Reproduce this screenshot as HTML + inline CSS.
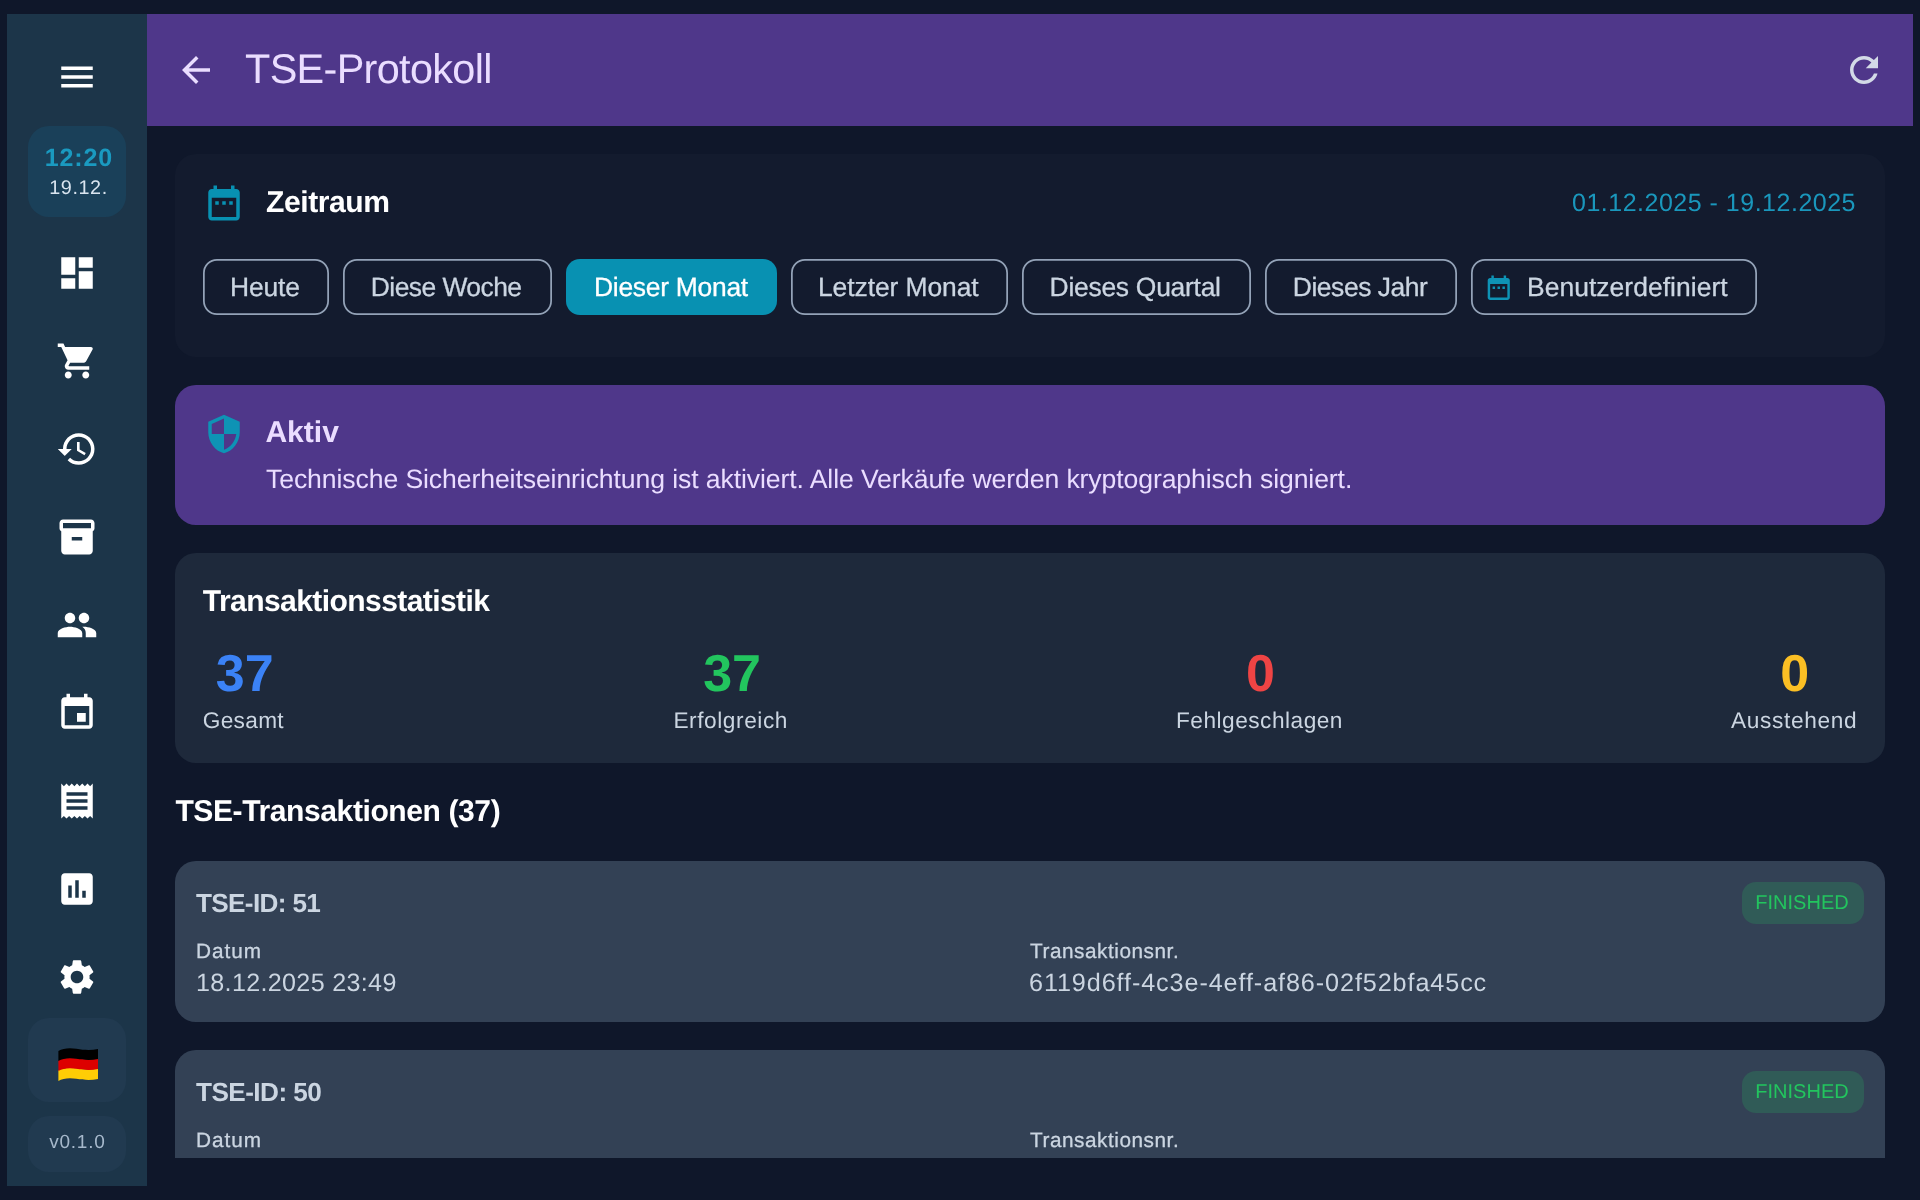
<!DOCTYPE html>
<html lang="de">
<head>
<meta charset="utf-8">
<title>TSE-Protokoll</title>
<style>
*{box-sizing:border-box;margin:0;padding:0}
html,body{width:1920px;height:1200px;overflow:hidden;background:#0f172a}
body{font-family:"Liberation Sans",sans-serif;color:#fff;position:relative;text-rendering:geometricPrecision}
.abs{position:absolute}
.t{position:absolute;white-space:nowrap;line-height:1}
svg{display:block}
#layer{position:absolute;left:0;top:0;width:1920px;height:1200px;will-change:transform}
#content{position:absolute;left:0;top:0;width:1920px;height:1158px;overflow:hidden}
.chip{position:absolute;top:259px;height:56px;border:1.75px solid #94a3b8;border-radius:14px;color:#cbd5e1;font-size:25.2px;line-height:52px;text-align:center;white-space:nowrap}
.chip.on{background:#0891b2;border-color:#0891b2;color:#fff}
.badge{position:absolute;width:122px;height:42px;border-radius:14px;background:#305b57;color:#22c55e;font-size:20px;line-height:43px;padding-right:2px;text-align:center;white-space:nowrap}
</style>
</head>
<body>
<div id="layer">
<div id="content">
<div class="abs" style="left:175px;top:154px;width:1710px;height:203px;background:#131b2e;border-radius:21px;"></div>
<svg class="abs" style="left:203px;top:182px;width:42px;height:42px;fill:#0891b2" viewBox="0 0 24 24"><path d="M9 11H7v2h2v-2zm4 0h-2v2h2v-2zm4 0h-2v2h2v-2zm2-7h-1V2h-2v2H8V2H6v2H5c-1.11 0-1.99.9-1.99 2L3 20c0 1.1.89 2 2 2h14c1.1 0 2-.9 2-2V6c0-1.100-.9-2-2-2zm0 16H5V9h14v11z"/></svg>
<div class="t" style="left:266px;top:187.88px;font-size:30.09px;color:#fff;font-weight:bold;letter-spacing:-0.429px;">Zeitraum</div>
<div class="t" style="left:1456px;top:190.74px;font-size:25px;color:#1a97bc;letter-spacing:0.5px;width:400px;text-align:right;">01.12.2025 - 19.12.2025</div>
<svg class="abs" style="left:203px;top:259px;width:126px;height:56px" viewBox="0 0 126 56"><rect x="0.875" y="0.875" width="124.25" height="54.25" rx="13.1" fill="none" stroke="#94a3b8" stroke-width="1.75"/></svg><div class="t" style="left:230px;top:273.96px;font-size:26.45px;color:#cbd5e1;letter-spacing:-0.125px;-webkit-text-stroke:.3px #cbd5e1;">Heute</div>
<svg class="abs" style="left:343px;top:259px;width:209px;height:56px" viewBox="0 0 209 56"><rect x="0.875" y="0.875" width="207.25" height="54.25" rx="13.1" fill="none" stroke="#94a3b8" stroke-width="1.75"/></svg><div class="t" style="left:370.8px;top:273.96px;font-size:26.45px;color:#cbd5e1;letter-spacing:-0.55px;-webkit-text-stroke:.3px #cbd5e1;">Diese Woche</div>
<svg class="abs" style="left:566px;top:259px;width:211px;height:56px" viewBox="0 0 211 56"><rect x="0" y="0" width="211" height="56" rx="14" fill="#0891b2"/></svg><div class="t" style="left:594px;top:273.96px;font-size:26.45px;color:#fff;letter-spacing:-0.273px;-webkit-text-stroke:.3px #fff;">Dieser Monat</div>
<svg class="abs" style="left:791px;top:259px;width:217px;height:56px" viewBox="0 0 217 56"><rect x="0.875" y="0.875" width="215.25" height="54.25" rx="13.1" fill="none" stroke="#94a3b8" stroke-width="1.75"/></svg><div class="t" style="left:818px;top:273.96px;font-size:26.45px;color:#cbd5e1;letter-spacing:-0.083px;-webkit-text-stroke:.3px #cbd5e1;">Letzter Monat</div>
<svg class="abs" style="left:1022px;top:259px;width:229px;height:56px" viewBox="0 0 229 56"><rect x="0.875" y="0.875" width="227.25" height="54.25" rx="13.1" fill="none" stroke="#94a3b8" stroke-width="1.75"/></svg><div class="t" style="left:1049.6px;top:273.96px;font-size:26.45px;color:#cbd5e1;letter-spacing:-0.269px;-webkit-text-stroke:.3px #cbd5e1;">Dieses Quartal</div>
<svg class="abs" style="left:1265px;top:259px;width:192px;height:56px" viewBox="0 0 192 56"><rect x="0.875" y="0.875" width="190.25" height="54.25" rx="13.1" fill="none" stroke="#94a3b8" stroke-width="1.75"/></svg><div class="t" style="left:1292.8px;top:273.96px;font-size:26.45px;color:#cbd5e1;letter-spacing:-0.45px;-webkit-text-stroke:.3px #cbd5e1;">Dieses Jahr</div>
<svg class="abs" style="left:1471px;top:259px;width:286px;height:56px" viewBox="0 0 286 56"><rect x="0.875" y="0.875" width="284.25" height="54.25" rx="13.1" fill="none" stroke="#94a3b8" stroke-width="1.75"/></svg><div class="t" style="left:1527px;top:273.96px;font-size:26.45px;color:#cbd5e1;letter-spacing:0.047px;-webkit-text-stroke:.3px #cbd5e1;">Benutzerdefiniert</div>
<svg class="abs" style="left:1484.1px;top:272.5px;width:29.5px;height:29.5px;fill:#0e93b5" viewBox="0 0 24 24"><path d="M9 11H7v2h2v-2zm4 0h-2v2h2v-2zm4 0h-2v2h2v-2zm2-7h-1V2h-2v2H8V2H6v2H5c-1.11 0-1.99.9-1.99 2L3 20c0 1.1.89 2 2 2h14c1.1 0 2-.9 2-2V6c0-1.100-.9-2-2-2zm0 16H5V9h14v11z"/></svg>
<div class="abs" style="left:175px;top:385px;width:1710px;height:140px;background:#4f378a;border-radius:21px;"></div>
<svg class="abs" style="left:203px;top:413px;width:42px;height:42px;fill:#0e93b5" viewBox="0 0 24 24"><path d="M12 1L3 5v6c0 5.55 3.84 10.74 9 12 5.16-1.26 9-6.45 9-12V5l-9-4zm0 10.99h7c-.53 4.12-3.28 7.79-7 8.94V12H5V6.3l7-3.11v8.8z"/></svg>
<div class="t" style="left:265.4px;top:417.88px;font-size:30.09px;color:#eaddff;font-weight:bold;">Aktiv</div>
<div class="t" style="left:266px;top:465.83px;font-size:26.6px;color:#eaddff;letter-spacing:-0.096px;">Technische Sicherheitseinrichtung ist aktiviert. Alle Verkäufe werden kryptographisch signiert.</div>
<div class="abs" style="left:175px;top:553px;width:1710px;height:210px;background:#1e293b;border-radius:21px;"></div>
<div class="t" style="left:202.8px;top:586.88px;font-size:30.09px;color:#fff;font-weight:bold;letter-spacing:-0.6px;">Transaktionsstatistik</div>
<div class="t" style="left:144.65px;top:647.58px;font-size:52px;color:#3b82f6;font-weight:bold;width:200px;text-align:center;">37</div>
<div class="t" style="left:202.8px;top:709.16px;font-size:22.67px;color:#cbd5e1;letter-spacing:0.3px;">Gesamt</div>
<div class="t" style="left:632.125px;top:647.58px;font-size:52px;color:#22c55e;font-weight:bold;width:200px;text-align:center;">37</div>
<div class="t" style="left:673.4px;top:709.16px;font-size:22.67px;color:#cbd5e1;letter-spacing:0.575px;">Erfolgreich</div>
<div class="t" style="left:1160.55px;top:647.58px;font-size:52px;color:#ef4444;font-weight:bold;width:200px;text-align:center;">0</div>
<div class="t" style="left:1176px;top:709.16px;font-size:22.67px;color:#cbd5e1;letter-spacing:0.5px;">Fehlgeschlagen</div>
<div class="t" style="left:1694.8px;top:647.58px;font-size:52px;color:#fbbf24;font-weight:bold;width:200px;text-align:center;">0</div>
<div class="t" style="left:1731px;top:709.16px;font-size:22.67px;color:#cbd5e1;letter-spacing:0.667px;">Ausstehend</div>
<div class="t" style="left:175.4px;top:796.88px;font-size:30.09px;color:#fff;font-weight:bold;letter-spacing:-0.429px;">TSE-Transaktionen (37)</div>
<div class="abs" style="left:175px;top:861px;width:1710px;height:160.5px;background:#334155;border-radius:21px;"></div>
<div class="t" style="left:196px;top:890.21px;font-size:26.16px;color:#cbd5e1;font-weight:bold;letter-spacing:-0.667px;">TSE-ID: 51</div>
<div class="badge" style="left:1742px;top:882px">FINISHED</div>
<div class="t" style="left:196px;top:941.76px;font-size:20.78px;color:#cbd5e1;letter-spacing:1px;-webkit-text-stroke:.3px #cbd5e1;">Datum</div>
<div class="t" style="left:196px;top:971.10px;font-size:25.1px;color:#cbd5e1;letter-spacing:0.333px;">18.12.2025 23:49</div>
<div class="t" style="left:1030px;top:941.76px;font-size:20.78px;color:#cbd5e1;letter-spacing:0.536px;-webkit-text-stroke:.3px #cbd5e1;">Transaktionsnr.</div>
<div class="t" style="left:1029px;top:971.02px;font-size:25.2px;color:#cbd5e1;letter-spacing:0.9px;">6119d6ff-4c3e-4eff-af86-02f52bfa45cc</div>
<div class="abs" style="left:175px;top:1050px;width:1710px;height:160.5px;background:#334155;border-radius:21px;"></div>
<div class="t" style="left:196px;top:1079.21px;font-size:26.16px;color:#cbd5e1;font-weight:bold;letter-spacing:-0.556px;">TSE-ID: 50</div>
<div class="badge" style="left:1742px;top:1071px">FINISHED</div>
<div class="t" style="left:196px;top:1130.76px;font-size:20.78px;color:#cbd5e1;letter-spacing:1px;-webkit-text-stroke:.3px #cbd5e1;">Datum</div>
<div class="t" style="left:196px;top:1160.10px;font-size:25.1px;color:#cbd5e1;letter-spacing:0.333px;">18.12.2025 23:48</div>
<div class="t" style="left:1030px;top:1130.76px;font-size:20.78px;color:#cbd5e1;letter-spacing:0.536px;-webkit-text-stroke:.3px #cbd5e1;">Transaktionsnr.</div>
<div class="t" style="left:1029px;top:1160.02px;font-size:25.2px;color:#cbd5e1;letter-spacing:0.9px;">a3f0c2d1-7b4e-4c9a-9e21-5d8f3b6a7c10</div>
</div>
<div class="abs" style="left:7px;top:14px;width:140px;height:1172px;background:#1c3549;"></div>
<svg class="abs" style="left:56px;top:55.75px;width:42px;height:42px;fill:#fff" viewBox="0 0 24 24"><path d="M3 18h18v-2H3v2zm0-5h18v-2H3v2zm0-7v2h18V6H3z"/></svg>
<div class="abs" style="left:28px;top:126px;width:98px;height:91px;background:#1a4059;border-radius:21px;"></div>
<div class="t" style="left:29.5px;top:145.84px;font-size:25px;color:#1a9ac0;font-weight:bold;letter-spacing:0.9px;width:98px;text-align:center;text-indent:.9px;">12:20</div>
<div class="t" style="left:29.5px;top:178.84px;font-size:19.8px;color:#d9e4ef;letter-spacing:0.6px;width:98px;text-align:center;">19.12.</div>
<svg class="abs" style="left:56px;top:251.75px;width:42px;height:42px;fill:#fff" viewBox="0 0 24 24"><path d="M3 13h8V3H3v10zm0 8h8v-6H3v6zm10 0h8V11h-8v10zm0-18v6h8V3h-8z"/></svg>
<svg class="abs" style="left:56px;top:339.82px;width:42px;height:42px;fill:#fff" viewBox="0 0 24 24"><path d="M7 18c-1.1 0-1.99.9-1.99 2S5.9 22 7 22s2-.9 2-2-.9-2-2-2zM1 2v2h2l3.6 7.59-1.35 2.45c-.16.28-.25.61-.25.96 0 1.1.9 2 2 2h12v-2H7.42c-.14 0-.25-.11-.25-.25l.03-.12.9-1.63h7.45c.75 0 1.41-.41 1.75-1.03l3.58-6.49c.08-.14.12-.31.12-.48 0-.55-.45-1-1-1H5.21l-.94-2H1zm16 16c-1.1 0-1.99.9-1.99 2s.89 2 1.99 2 2-.9 2-2-.9-2-2-2z"/></svg>
<svg class="abs" style="left:56px;top:427.89px;width:42px;height:42px;fill:#fff" viewBox="0 0 24 24"><path d="M13 3c-4.97 0-9 4.03-9 9H1l3.89 3.89.07.14L9 12H6c0-3.87 3.13-7 7-7s7 3.13 7 7-3.13 7-7 7c-1.93 0-3.68-.79-4.94-2.06l-1.42 1.42C8.27 19.99 10.51 21 13 21c4.97 0 9-4.03 9-9s-4.03-9-9-9zm-1 5v5l4.28 2.54.72-1.21-3.5-2.08V8H12z"/></svg>
<svg class="abs" style="left:56px;top:515.96px;width:42px;height:42px;fill:#fff" viewBox="0 0 24 24"><path d="M20 2H4c-1 0-2 .9-2 2v3.01c0 .72.43 1.34 1 1.69V20c0 1.1 1.1 2 2 2h14c.9 0 2-.9 2-2V8.7c.57-.35 1-.97 1-1.69V4c0-1.1-1-2-2-2zm-5 12H9v-2h6v2zm5-7H4V4h16v3z"/></svg>
<svg class="abs" style="left:56px;top:604.03px;width:42px;height:42px;fill:#fff" viewBox="0 0 24 24"><path d="M16 11c1.66 0 2.99-1.34 2.99-3S17.66 5 16 5c-1.66 0-3 1.34-3 3s1.34 3 3 3zm-8 0c1.66 0 2.99-1.34 2.99-3S9.66 5 8 5C6.34 5 5 6.34 5 8s1.34 3 3 3zm0 2c-2.33 0-7 1.17-7 3.5V19h14v-2.5c0-2.33-4.67-3.5-7-3.5zm8 0c-.29 0-.62.02-.97.05 1.16.84 1.97 1.97 1.97 3.45V19h6v-2.5c0-2.33-4.67-3.5-7-3.5z"/></svg>
<svg class="abs" style="left:56px;top:692.1px;width:42px;height:42px;fill:#fff" viewBox="0 0 24 24"><path d="M17 12h-5v5h5v-5zM16 1v2H8V1H6v2H5c-1.11 0-1.99.9-1.99 2L3 19c0 1.1.89 2 2 2h14c1.1 0 2-.9 2-2V5c0-1.1-.9-2-2-2h-1V1h-2zm3 18H5V8h14v11z"/></svg>
<svg class="abs" style="left:56px;top:780.17px;width:42px;height:42px;fill:#fff" viewBox="0 0 24 24"><path d="M18 17H6v-2h12v2zm0-4H6v-2h12v2zm0-4H6V7h12v2zM3 22l1.5-1.5L6 22l1.5-1.5L9 22l1.5-1.5L12 22l1.5-1.5L15 22l1.5-1.5L18 22l1.5-1.5L21 22V2l-1.5 1.5L18 2l-1.5 1.5L15 2l-1.5 1.5L12 2l-1.5 1.5L9 2 7.5 3.5 6 2 4.5 3.5 3 2v20z"/></svg>
<svg class="abs" style="left:56px;top:868.24px;width:42px;height:42px;fill:#fff" viewBox="0 0 24 24"><path d="M19 3H5c-1.1 0-2 .9-2 2v14c0 1.1.9 2 2 2h14c1.1 0 2-.9 2-2V5c0-1.1-.9-2-2-2zM9 17H7v-7h2v7zm4 0h-2V7h2v10zm4 0h-2v-4h2v4z"/></svg>
<svg class="abs" style="left:56px;top:956.31px;width:42px;height:42px;fill:#fff" viewBox="0 0 24 24"><path d="M19.14 12.94c.04-.3.06-.61.06-.94 0-.32-.02-.64-.07-.94l2.03-1.58c.18-.14.23-.41.12-.61l-1.92-3.32c-.12-.22-.37-.29-.59-.22l-2.39.96c-.5-.38-1.03-.7-1.62-.94l-.36-2.54c-.04-.24-.24-.41-.48-.41h-3.84c-.24 0-.43.17-.47.41l-.36 2.54c-.59.24-1.13.57-1.62.94l-2.39-.96c-.22-.08-.47 0-.59.22L2.74 8.87c-.12.21-.08.47.12.61l2.03 1.58c-.05.3-.09.63-.09.94s.02.64.07.94l-2.03 1.58c-.18.14-.23.41-.12.61l1.92 3.32c.12.22.37.29.59.22l2.39-.96c.5.38 1.03.7 1.62.94l.36 2.54c.05.24.24.41.48.41h3.84c.24 0 .44-.17.47-.41l.36-2.54c.59-.24 1.13-.56 1.62-.94l2.39.96c.22.08.47 0 .59-.22l1.92-3.32c.12-.22.07-.47-.12-.61l-2.01-1.58zM12 15.6c-1.98 0-3.6-1.62-3.6-3.6s1.62-3.6 3.6-3.6 3.6 1.62 3.6 3.6-1.62 3.6-3.6 3.6z"/></svg>
<div class="abs" style="left:28px;top:1018px;width:98px;height:84px;background:#213a50;border-radius:21px;"></div>
<div class="abs" style="left:28px;top:1116px;width:98px;height:56px;background:#213a50;border-radius:21px;"></div>
<div class="t" style="left:28px;top:1133.22px;font-size:19px;color:#a6b8cb;letter-spacing:0.75px;width:98px;text-align:center;text-indent:.75px;">v0.1.0</div>
<svg class="abs" style="left:57.6px;top:1046.6px;width:40.7px;height:34.9px" viewBox="0 0 42 36">
<path d="M0.4 24.1 C5 21.3 12 20.7 19 21.9 C27 23.3 34 23.7 41.4 22.1 L41.4 33 C34 34.6 27 34.2 19 32.8 C12 31.6 5 32.2 0.4 35 Z" fill="#ffcd05"/>
<path d="M0.4 13.8 C5 11 12 10.4 19 11.6 C27 13 34 13.4 41.4 11.8 L41.4 22.7 C34 24.3 27 23.9 19 22.5 C12 21.3 5 21.9 0.4 24.7 Z" fill="#dd0000"/>
<path d="M0.4 4.1 C5 1.3 12 0.7 19 1.9 C27 3.3 34 3.7 41.4 2.1 L41.4 12.4 C34 14 27 13.6 19 12.2 C12 11 5 11.6 0.4 14.4 Z" fill="#000"/>
</svg>
<div class="abs" style="left:147px;top:14px;width:1766px;height:112px;background:#4f378a;"></div>
<svg class="abs" style="left:175px;top:49px;width:42px;height:42px;fill:#eaddff" viewBox="0 0 24 24"><path d="M20 11H7.83l5.59-5.59L12 4l-8 8 8 8 1.41-1.41L7.83 13H20v-2z"/></svg>
<div class="t" style="left:245px;top:49.29px;font-size:41.42px;color:#eaddff;letter-spacing:-0.667px;">TSE-Protokoll</div>
<svg class="abs" style="left:1843px;top:49px;width:42px;height:42px;fill:#d3dae7" viewBox="0 0 24 24"><path d="M17.65 6.35C16.2 4.9 14.21 4 12 4c-4.42 0-7.99 3.58-7.99 8s3.57 8 7.99 8c3.73 0 6.84-2.55 7.73-6h-2.08c-.82 2.33-3.04 4-5.650 4-3.31 0-6-2.69-6-6s2.69-6 6-6c1.66 0 3.14.69 4.22 1.78L13 11h7V4l-2.35 2.35z"/></svg>
</div>
</body>
</html>
